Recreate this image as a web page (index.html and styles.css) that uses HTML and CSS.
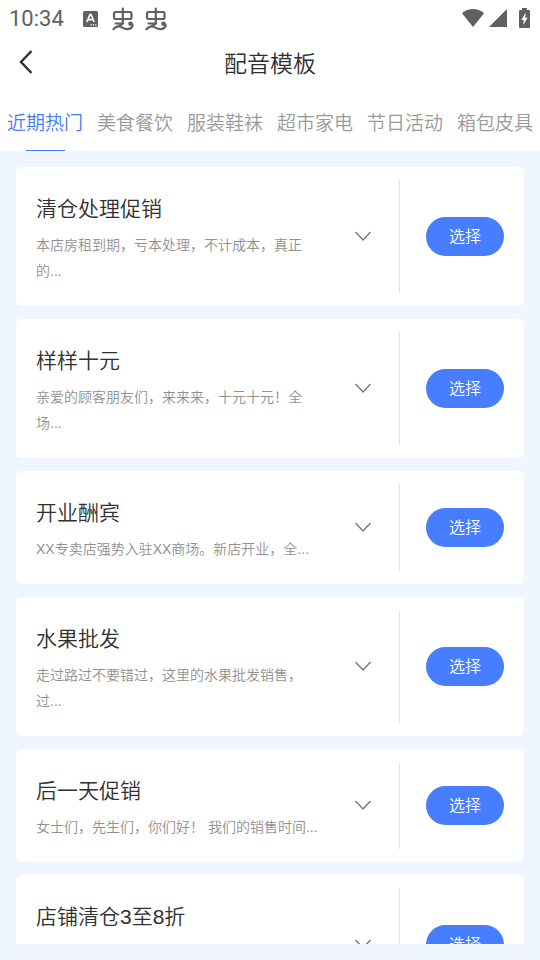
FILE: index.html
```html
<!DOCTYPE html>
<html lang="zh-CN">
<head>
<meta charset="utf-8">
<meta name="viewport" content="width=device-width, initial-scale=1">
<title>配音模板</title>
<link rel="stylesheet" href="styles.css">
</head>
<body>
<svg class="defs" aria-hidden="true">
  <symbol id="chevron" viewBox="0 0 18 12"><path d="M1.500 1 9 9 16.500 1" fill="none" stroke="currentColor" stroke-width="1.500"/></symbol>
  <symbol id="bug" viewBox="0 0 22 24"><g fill="none" stroke="currentColor" stroke-width="2.200" stroke-linecap="round" stroke-linejoin="round"><rect x="2" y="5" width="17.500" height="7" rx="1.500"/><path d="M10.800 1.500v14.500M3.500 16.500h7.500M1.500 22.300c1.500-3 4.500-1.500 9.500-5.800M7 19.300c3 .2 4.500 3.200 8.500 2.900 4-.2 6-3.200 4.500-5"/></g><circle cx="18.500" cy="16.800" r="2.300" fill="currentColor"/></symbol>
</svg>
<div class="app">
  <div class="status">
    <span class="time">10:34</span>
    <div class="notices">
      <svg class="letter" viewBox="0 0 15 16"><rect width="15" height="16" rx="1.500" fill="currentColor"/><path d="M3.800 11 7 3.500h1L11.200 11M5.200 8.700h4.500" fill="none" stroke="#fff" stroke-width="1.700"/><path d="M7.500 13.800h1.300M9.800 13.800h1.300M12.100 13.800h1.300" stroke="#fff" stroke-width="1.200"/></svg>
      <svg class="bug"><use href="#bug"/></svg>
      <svg class="bug"><use href="#bug"/></svg>
    </div>
    <div class="signals">
      <svg class="wifi" viewBox="0 0 22 18"><path d="M0 4.200C6.500-1.400 15.500-1.400 22 4.200L11 18Z" fill="currentColor"/></svg>
      <svg class="cell" viewBox="0 0 18 18"><path d="M18 0v18H0Z" fill="currentColor"/></svg>
      <svg class="battery" viewBox="0 0 11 20"><path d="M3 0h5v2h2q1 0 1 1v16q0 1-1 1H1q-1 0-1-1V3q0-1 1-1h2Z" fill="currentColor"/><path d="M6.800 4.500 2.300 12h2.500L4.200 17 8.700 9.800H6.200Z" fill="#fff"/></svg>
    </div>
  </div>
  <header class="header">
    <button class="back" type="button" aria-label="返回"><svg viewBox="0 0 14 24"><path d="M12.500 1 2 12l10.500 11" fill="none" stroke="currentColor" stroke-width="2.400"/></svg></button>
    <h1>配音模板</h1>
  </header>
  <nav class="tabs">
    <button class="tab active" type="button">近期热门</button>
    <button class="tab" type="button">美食餐饮</button>
    <button class="tab" type="button">服装鞋袜</button>
    <button class="tab" type="button">超市家电</button>
    <button class="tab" type="button">节日活动</button>
    <button class="tab" type="button">箱包皮具</button>
  </nav>
  <main class="panel">
    <div class="list">
      <article class="card">
        <div class="info"><h2>清仓处理促销</h2><p>本店房租到期，亏本处理，不计成本，真正的...</p></div>
        <button class="expand" type="button" aria-label="展开"><svg><use href="#chevron"/></svg></button>
        <div class="action"><button class="choose" type="button">选择</button></div>
      </article>
      <article class="card">
        <div class="info"><h2>样样十元</h2><p>亲爱的顾客朋友们，来来来，十元十元！全场...</p></div>
        <button class="expand" type="button" aria-label="展开"><svg><use href="#chevron"/></svg></button>
        <div class="action"><button class="choose" type="button">选择</button></div>
      </article>
      <article class="card">
        <div class="info"><h2>开业酬宾</h2><p>XX专卖店强势入驻XX商场。新店开业，全...</p></div>
        <button class="expand" type="button" aria-label="展开"><svg><use href="#chevron"/></svg></button>
        <div class="action"><button class="choose" type="button">选择</button></div>
      </article>
      <article class="card">
        <div class="info"><h2>水果批发</h2><p>走过路过不要错过，这里的水果批发销售，过...</p></div>
        <button class="expand" type="button" aria-label="展开"><svg><use href="#chevron"/></svg></button>
        <div class="action"><button class="choose" type="button">选择</button></div>
      </article>
      <article class="card">
        <div class="info"><h2>后一天促销</h2><p>女士们，先生们，你们好！ 我们的销售时间...</p></div>
        <button class="expand" type="button" aria-label="展开"><svg><use href="#chevron"/></svg></button>
        <div class="action"><button class="choose" type="button">选择</button></div>
      </article>
      <article class="card last">
        <div class="info"><h2>店铺清仓3至8折</h2></div>
        <button class="expand" type="button" aria-label="展开"><svg><use href="#chevron"/></svg></button>
        <div class="action"><button class="choose" type="button">选择</button></div>
      </article>
    </div>
  </main>
</div>
</body>
</html>
```
FILE: styles.css
```css
* { box-sizing: border-box; }
body {
  margin: 0;
  background: #eff6ff;
  color: #303030;
  font-family: "Liberation Sans", "Noto Sans CJK SC", sans-serif;
  font-weight: 350;
}
button {
  padding: 0;
  border: 0;
  background: none;
  color: inherit;
  font: inherit;
  cursor: pointer;
}
h1, h2, p { margin: 0; font-weight: inherit; }
svg { display: block; }
.defs { position: absolute; width: 0; height: 0; }
.app { display: flex; flex-direction: column; height: 100vh; }

.status {
  display: flex;
  align-items: center;
  height: 37px;
  padding: 0 10px 0 9px;
  background: #fff;
  color: #606060;
}
.time { font-family: Roboto, sans-serif; font-size: 22px; font-weight: 400; line-height: 24px; }
.notices { display: flex; align-items: center; gap: 11px; margin-left: 19px; }
.letter { width: 15px; height: 16px; margin-right: 3px; }
.bug { width: 22px; height: 24px; }
.signals { display: flex; align-items: center; margin-left: auto; }
.signals svg { margin-bottom: 2px; }
.wifi { width: 22px; height: 18px; }
.cell { width: 18px; height: 18px; margin: 0 12px 0 5px; }
.battery { width: 11px; height: 20px; }

.header {
  display: grid;
  grid-template-columns: 54px 1fr 54px;
  align-items: center;
  height: 54px;
  background: #fff;
}
.back { display: flex; align-items: center; align-self: start; height: 50px; padding-left: 19px; }
.back svg { width: 14px; height: 24px; }
.header h1 { font-size: 23px; line-height: 34px; text-align: center; }

.tabs {
  display: flex;
  justify-content: space-between;
  height: 60px;
  padding: 0 7px;
  background: #fff;
}
.tab {
  display: flex;
  flex-direction: column;
  align-items: center;
  justify-content: space-between;
  padding-top: 18px;
  color: #999;
  font-size: 19px;
  line-height: 30px;
}
.tab.active { color: #447bfc; }
.tab.active::after { content: ""; width: 39px; height: 1px; background: #447bfc; }

.panel { flex: 1; min-height: 0; padding: 16px; }
.list {
  display: flex;
  flex-direction: column;
  gap: 13px;
  height: 100%;
  overflow-y: auto;
  scrollbar-width: none;
}
.card {
  display: flex;
  flex-shrink: 0;
  border-radius: 6px;
  background: #fff;
}
.last { min-height: 139px; }
.info { flex: 1; padding: 28px 4px 22px 20px; }
.info h2 { margin-bottom: 9px; font-size: 21px; line-height: 28px; }
.info p { color: #909090; font-size: 14px; line-height: 26px; }
.expand { width: 74px; padding-left: 29px; color: #777b85; }
.expand svg { width: 18px; height: 12px; }
.action {
  display: flex;
  align-items: center;
  margin: 13px 0;
  padding: 0 20px 0 26px;
  border-left: 1px solid #e2e2e2;
}
.choose {
  width: 78px;
  height: 39px;
  border-radius: 20px;
  background: #477dff;
  color: #fff;
  font-size: 16px;
  line-height: 24px;
}
```
